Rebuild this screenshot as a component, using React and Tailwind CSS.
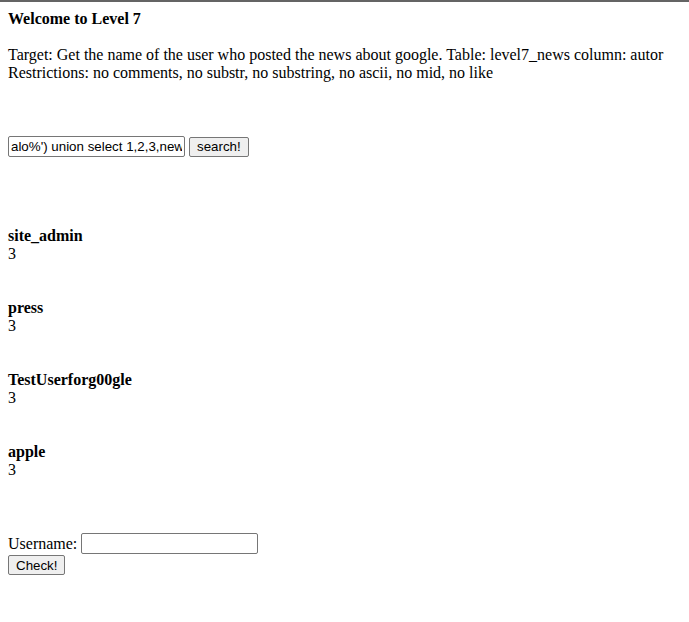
import React from "react";

const serif = { fontFamily: '"Liberation Serif", "Times New Roman", serif' };

function Entry({ name, first }) {
  return (
    <div className={first ? "mt-[70px]" : "mt-[36px]"}>
      <div className="font-bold">{name}</div>
      <div>3</div>
    </div>
  );
}

export default function App() {
  return (
    <div className="min-h-[622px] bg-white text-black">
      <div className="h-[2px] bg-[#646464]" />
      <div
        className="px-[8px] pt-[8px] text-[16px] leading-[18px] font-['Liberation_Serif','Times_New_Roman',serif]"
        style={serif}
      >
        <div className="font-bold">Welcome to Level 7</div>
        <div className="mt-[18px]">
          Target: Get the name of the user who posted the news about google. Table: level7_news column: autor
        </div>
        <div>Restrictions: no comments, no substr, no substring, no ascii, no mid, no like</div>

        <div className="mt-[54px] flex items-center gap-[4px]">
          <input
            readOnly
            defaultValue="alo%') union select 1,2,3,news from level7_news"
            className="h-[21px] w-[177px] rounded-[2px] border border-[#767676] bg-white px-[2px] text-[13.333px] leading-[15px] text-black outline-none font-['Liberation_Sans',Arial,sans-serif]"
          />
          <button className="h-[20px] rounded-[2px] border border-[#767676] bg-[#efefef] px-[7px] text-[13.333px] leading-[15px] text-black font-['Liberation_Sans',Arial,sans-serif]">
            search!
          </button>
        </div>

        <Entry name="site_admin" first />
        <Entry name="press" />
        <Entry name="TestUserforg00gle" />
        <Entry name="apple" />

        <div className="mt-[54px] flex items-center gap-[4px]">
          <span>Username:</span>
          <input
            readOnly
            className="h-[21px] w-[177px] rounded-[2px] border border-[#767676] bg-white px-[2px] text-[13.333px] outline-none font-['Liberation_Sans',Arial,sans-serif]"
          />
        </div>
        <div className="mt-[1px]">
          <button className="h-[20px] rounded-[2px] border border-[#767676] bg-[#efefef] px-[7px] text-[13.333px] leading-[15px] text-black font-['Liberation_Sans',Arial,sans-serif]">
            Check!
          </button>
        </div>
      </div>
    </div>
  );
}
